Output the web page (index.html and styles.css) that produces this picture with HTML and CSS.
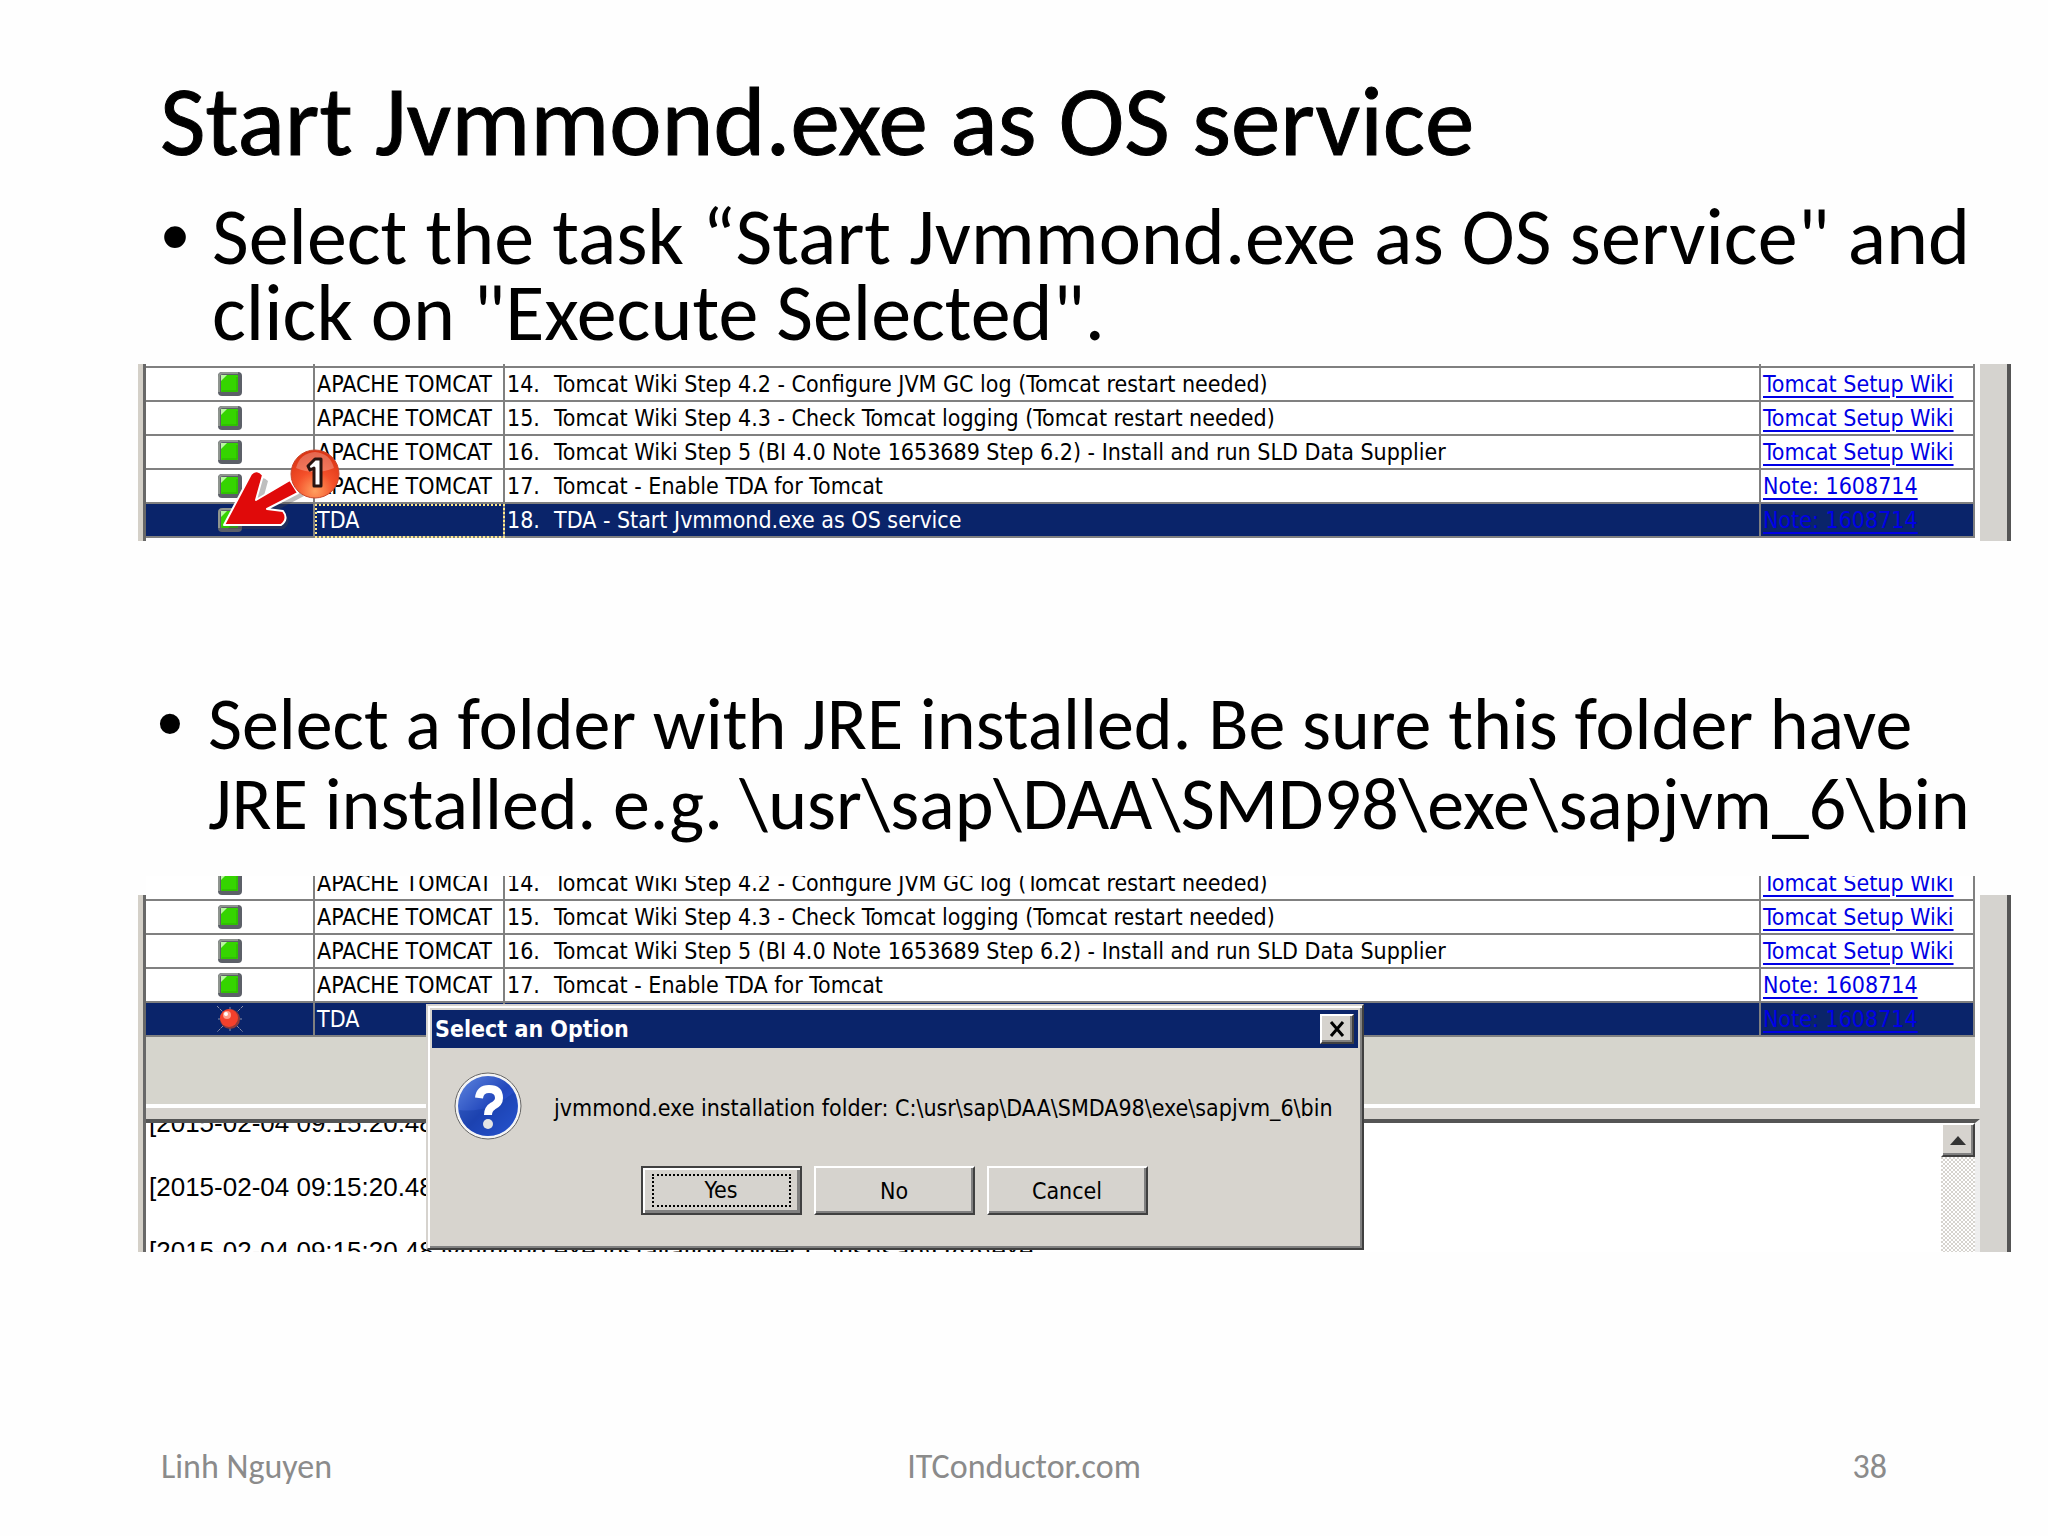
FILE: index.html
```
<!doctype html>
<html lang="en">

<head>
  <meta charset="utf-8">
  <meta name="viewport" content="width=device-width, initial-scale=1">
  <title>Start Jvmmond.exe as OS service</title>
  <link rel="stylesheet" href="styles.css">
</head>

<body>
  <!-- status icons, reused in the task lists -->
  <svg width="0" height="0" class="defs" aria-hidden="true">
    <defs>
      <symbol id="ok" viewBox="0 0 24 24">
        <rect x="0" y="0" width="24" height="24" rx="4" fill="#5c6068"/>
        <path d="M1 20V5q0-4 4-4h15" fill="none" stroke="#8f958f" stroke-width="2"/>
        <rect x="3" y="3" width="17" height="17" rx="1" fill="#35d400"/>
        <path d="M3 9V3h6z" fill="#b8f8a0"/>
        <path d="M4 19h15V5" fill="none" stroke="#2cae04" stroke-width="1"/>
      </symbol>
      <symbol id="failed" viewBox="0 0 28 28">
        <path d="M1 1l26 26M27 1L1 27M14 2v3M14 23v3M2 14h3M23 14h3" stroke="#8a8fa8" stroke-width="1" stroke-dasharray="3 1"/>
        <circle cx="14" cy="14" r="10" fill="#8d3a3a"/>
        <circle cx="13" cy="13" r="9" fill="#f4402c"/>
        <circle cx="11" cy="10" r="4" fill="#ff9c88"/>
        <circle cx="10" cy="9" r="2" fill="#fff"/>
      </symbol>
    </defs>
  </svg>

  <main>
    <h1>Start Jvmmond.exe as OS service</h1>
    <ul class="step">
      <li>Select the task “Start Jvmmond.exe as OS service" and<br>click on "Execute Selected".</li>
    </ul>

    <div class="shot first">
      <div class="edge-left"></div>
      <div class="pane">
        <table class="tasks">
          <colgroup><col class="c-status"><col class="c-group"><col><col class="c-link"></colgroup>
          <tbody>
            <tr class="cut"><td></td><td></td><td></td><td></td></tr>
            <tr><td><svg class="icon"><use href="#ok"/></svg></td><td>APACHE TOMCAT</td><td><span class="num">14.</span>Tomcat Wiki Step 4.2 - Configure JVM GC log (Tomcat restart needed)</td><td><a href="#">Tomcat Setup Wiki</a></td></tr>
            <tr><td><svg class="icon"><use href="#ok"/></svg></td><td>APACHE TOMCAT</td><td><span class="num">15.</span>Tomcat Wiki Step 4.3 - Check Tomcat logging (Tomcat restart needed)</td><td><a href="#">Tomcat Setup Wiki</a></td></tr>
            <tr><td><svg class="icon"><use href="#ok"/></svg></td><td>APACHE TOMCAT</td><td><span class="num">16.</span>Tomcat Wiki Step 5 (BI 4.0 Note 1653689 Step 6.2) - Install and run SLD Data Supplier</td><td><a href="#">Tomcat Setup Wiki</a></td></tr>
            <tr><td><svg class="icon"><use href="#ok"/></svg></td><td>APACHE TOMCAT</td><td><span class="num">17.</span>Tomcat - Enable TDA for Tomcat</td><td><a href="#">Note: 1608714</a></td></tr>
            <tr class="selected"><td><svg class="icon"><use href="#ok"/></svg></td><td class="focus">TDA</td><td><span class="num">18.</span>TDA - Start Jvmmond.exe as OS service</td><td><a href="#">Note: 1608714</a></td></tr>
          </tbody>
        </table>
      </div>
      <div class="edge-right"></div>

      <svg class="callout" viewBox="0 0 124 90" role="img" aria-label="1">
        <defs>
          <radialGradient id="ball" cx="50%" cy="85%" r="80%">
            <stop offset="0" stop-color="#ffa060"/>
            <stop offset=".5" stop-color="#f4502a"/>
            <stop offset="1" stop-color="#dc3414"/>
          </radialGradient>
        </defs>
        <path d="M4 79L33 31q5-6 11 0L38 53 72 33l8 13-32 17 12 1q9 7 0 15z" fill="#444" opacity=".35" transform="translate(4 4)"/>
        <path d="M4 79L31 28q6-6 12 1L36 54 70 34l8 13-31 16 16 2q6 8-2 14z" fill="#e00a0a" stroke="#fff" stroke-width="2" stroke-linejoin="round"/>
        <circle cx="95" cy="28" r="24" fill="url(#ball)" stroke="#c9472c" stroke-width="1"/>
        <path d="M76 22q4-15 19-16 15 1 19 16-19 8-38 0z" fill="#fff" opacity=".25"/>
        <path d="M88 20l7-7h6v27h-7V22l-4 2z" fill="#fff" stroke="#2a1410" stroke-width="3" stroke-linejoin="round"/>
      </svg>
    </div>

    <ul class="step second">
      <li>Select a folder with JRE installed. Be sure this folder have<br>JRE installed. e.g. \usr\sap\DAA\SMD98\exe\sapjvm_6\bin</li>
    </ul>

    <div class="shot last">
      <div class="edge-left"></div>
      <div class="pane">
        <div class="list">
          <table class="tasks">
            <colgroup><col class="c-status"><col class="c-group"><col><col class="c-link"></colgroup>
            <tbody>
              <tr><td><svg class="icon"><use href="#ok"/></svg></td><td>APACHE TOMCAT</td><td><span class="num">14.</span>Tomcat Wiki Step 4.2 - Configure JVM GC log (Tomcat restart needed)</td><td><a href="#">Tomcat Setup Wiki</a></td></tr>
              <tr><td><svg class="icon"><use href="#ok"/></svg></td><td>APACHE TOMCAT</td><td><span class="num">15.</span>Tomcat Wiki Step 4.3 - Check Tomcat logging (Tomcat restart needed)</td><td><a href="#">Tomcat Setup Wiki</a></td></tr>
              <tr><td><svg class="icon"><use href="#ok"/></svg></td><td>APACHE TOMCAT</td><td><span class="num">16.</span>Tomcat Wiki Step 5 (BI 4.0 Note 1653689 Step 6.2) - Install and run SLD Data Supplier</td><td><a href="#">Tomcat Setup Wiki</a></td></tr>
              <tr><td><svg class="icon"><use href="#ok"/></svg></td><td>APACHE TOMCAT</td><td><span class="num">17.</span>Tomcat - Enable TDA for Tomcat</td><td><a href="#">Note: 1608714</a></td></tr>
              <tr class="selected"><td><svg class="icon failed"><use href="#failed"/></svg></td><td>TDA</td><td></td><td><a href="#">Note: 1608714</a></td></tr>
            </tbody>
          </table>
        </div>
        <div class="splitter"></div>
        <div class="log">
          <div class="lines">
            <p>[2015-02-04 09:15:20.48</p>
            <p>[2015-02-04 09:15:20.48</p>
            <p>[2015-02-04 09:15:20.48 jvmmond.exe installation folder C:\usr\sap\DAA\exe</p>
          </div>
          <div class="scrollbar">
            <button type="button" aria-label="Scroll up"><svg width="16" height="9" viewBox="0 0 16 9"><path d="M8 0l8 9H0z" fill="#333"/></svg></button>
          </div>
        </div>
      </div>
      <div class="edge-right"></div>

      <div class="dialog" role="dialog" aria-labelledby="dialog-title">
        <div class="titlebar">
          <span id="dialog-title">Select an Option</span>
          <button type="button" class="close" aria-label="Close"><svg width="18" height="16" viewBox="0 0 18 16"><path d="M3 1l12 14M15 1L3 15" fill="none" stroke="#000" stroke-width="3"/></svg></button>
        </div>
        <div class="message">
          <svg width="68" height="68" viewBox="0 0 68 68">
            <defs>
              <linearGradient id="blue" x1="0" y1="0" x2="1" y2="1">
                <stop offset="0" stop-color="#5f86de"/>
                <stop offset=".5" stop-color="#2348bd"/>
                <stop offset="1" stop-color="#3566f0"/>
              </linearGradient>
            </defs>
            <circle cx="34" cy="34" r="33" fill="#f4f4f4" stroke="#666" stroke-width="1"/>
            <circle cx="34" cy="34" r="30" fill="url(#blue)"/>
            <path d="M5 38q30 4 55-18 6 14 2 24-8 20-30 20Q8 60 5 38z" fill="#123a9e" opacity=".4"/>
            <path d="M25 26q1-9 10-9 10 0 10 9 0 5-6 8-5 3-5 9" fill="none" stroke="#fff" stroke-width="8"/>
            <circle cx="34" cy="52" r="5" fill="#e4e4e4"/>
          </svg>
          <span>jvmmond.exe installation folder: C:\usr\sap\DAA\SMDA98\exe\sapjvm_6\bin</span>
        </div>
        <div class="actions">
          <button type="button" class="default"><span>Yes</span></button>
          <button type="button">No</button>
          <button type="button">Cancel</button>
        </div>
      </div>
    </div>
  </main>

  <footer>
    <span>Linh Nguyen</span>
    <span>ITConductor.com</span>
    <span>38</span>
  </footer>
</body>
</html>
```
FILE: styles.css
```
* {
  box-sizing: border-box;
}
body {
  display: flex;
  flex-direction: column;
  min-height: 100vh;
  margin: 0;
  background-color: #fefefe;
  color: #000;
  font-family: Carlito, Lato, sans-serif;
}
main {
  flex: 1;
}
.defs {
  position: absolute;
}
h1 {
  margin: 0;
  padding: 62px 160px 0;
  font-size: 99px;
  font-weight: 400;
  line-height: 120px;
  -webkit-text-stroke: 1px #000;
}

/* bullets */
.step {
  margin: 17px 0 0;
  padding: 0 0 0 212px;
  list-style: none;
  font-size: 80px;
  line-height: 76px;
  white-space: nowrap;
}
.step li::before {
  content: "•";
  float: left;
  margin-left: -51px;
  font-family: "Liberation Sans", Arial, sans-serif;
}
.step.second {
  margin-top: 143px;
  padding-left: 208px;
  font-size: 74px;
  line-height: 80px;
}

/* task list windows */
.shot {
  position: relative;
  display: flex;
  margin: 0 37px 0 138px;
  font-family: "DejaVu Sans Condensed", "DejaVu Sans", sans-serif;
  font-stretch: condensed;
  font-size: 23px;
}
.shot.first {
  margin-top: 13px;
  height: 177px;
}
.shot.last {
  margin-top: 32px;
  height: 376px;
}
.edge-left {
  width: 8px;
  background-color: #d4d0c8;
  border-right: 3px solid #686868;
}
.edge-right {
  width: 31px;
  background-color: #d5d3cf;
  border-right: 4px solid #555;
}
.last .edge-left,
.last .edge-right {
  margin-top: 19px;
}
.pane {
  flex: 1;
  min-width: 0;
  overflow: hidden;
}
.first .pane {
  padding-right: 5px;
}
.tasks {
  width: 100%;
  table-layout: fixed;
  border-spacing: 0;
}
.c-status {
  width: 169px;
}
.c-group {
  width: 190px;
}
.c-link {
  width: 214px;
}
.tasks td {
  height: 34px;
  padding: 0 0 0 2px;
  border: solid #808080;
  border-width: 0 2px 2px 0;
  background-color: #fff;
  line-height: 32px;
  white-space: nowrap;
}
.tasks td:first-child {
  padding: 0;
  text-align: center;
}
.tasks .cut td {
  height: 4px;
  line-height: 0;
}
.tasks .selected td {
  background-color: #0a246a;
  color: #fff;
}
.tasks .selected .focus {
  outline: 2px dotted #ffe98a;
  outline-offset: -2px;
}
.tasks a {
  color: #0000e6;
  text-underline-offset: 4px;
}
.num {
  display: inline-block;
  width: 47px;
}
.icon {
  display: block;
  width: 24px;
  height: 24px;
  margin: auto;
}
.icon.failed {
  width: 28px;
  height: 28px;
}
.callout {
  position: absolute;
  left: 82px;
  top: 82px;
  width: 124px;
  height: 90px;
}

.list {
  display: flow-root;
  height: 232px;
  background-color: #d6d5cd;
  border: solid #fff;
  border-width: 0 5px 4px 0;
}
.list .tasks {
  margin-top: -9px;
}
.splitter {
  height: 11px;
  background-color: #d6d3ce;
}
.log {
  display: flex;
  height: 133px;
  background-color: #fff;
  border-top: 4px solid #555;
  border-right: 5px solid #eee;
}
.lines {
  flex: 1;
  overflow: hidden;
  padding-left: 3px;
  font-family: "Liberation Sans", Arial, sans-serif;
  font-size: 26px;
  line-height: 64px;
}
.lines p {
  margin: 0;
  white-space: nowrap;
}
.lines p:first-child {
  margin-top: -32px;
}
.scrollbar {
  width: 34px;
  background: repeating-conic-gradient(#d6d3ce 0 25%, #fff 0 50%) 0 0 / 4px 4px;
}

/* classic raised buttons */
button {
  display: flex;
  align-items: center;
  justify-content: center;
  padding: 0;
  border: 2px solid;
  border-color: #fff #404040 #404040 #fff;
  background-color: #d6d3ce;
  box-shadow: inset -2px -2px #808080;
  color: #000;
  font: inherit;
}
.scrollbar button {
  width: 34px;
  height: 34px;
}

.dialog {
  position: absolute;
  left: 288px;
  top: 128px;
  width: 938px;
  height: 246px;
  padding: 2px;
  border: 2px solid;
  border-color: #d6d3ce #404040 #404040 #d6d3ce;
  box-shadow: inset 2px 2px #fff, inset -2px -2px #808080;
  background-color: #d7d4ce;
}
.titlebar {
  display: flex;
  align-items: center;
  justify-content: space-between;
  height: 38px;
  margin: 2px 2px 0;
  padding: 0 4px 0 3px;
  background-color: #0a246a;
  color: #fff;
  font-weight: 700;
}
.close {
  width: 34px;
  height: 30px;
}
.message {
  display: flex;
  align-items: center;
  gap: 32px;
  height: 68px;
  margin: 24px 0 0 24px;
  white-space: nowrap;
}
.message span {
  padding-top: 4px;
}
.actions {
  display: flex;
  justify-content: center;
  gap: 12px;
  margin: 26px 2px 0 0;
}
.actions button {
  width: 161px;
  height: 49px;
}
.actions .default {
  border-color: #404040;
  box-shadow: inset 2px 2px #fff, inset -3px -3px #808080;
}
.default span {
  width: 139px;
  border: 2px dotted #000;
  line-height: 29px;
}

footer {
  display: grid;
  grid-template-columns: 1fr 1fr 1fr;
  padding: 0 161px 49px;
  color: #8b8b8b;
  font-size: 34px;
  line-height: 40px;
}
footer span:nth-child(2) {
  text-align: center;
}
footer span:last-child {
  text-align: right;
}
```
